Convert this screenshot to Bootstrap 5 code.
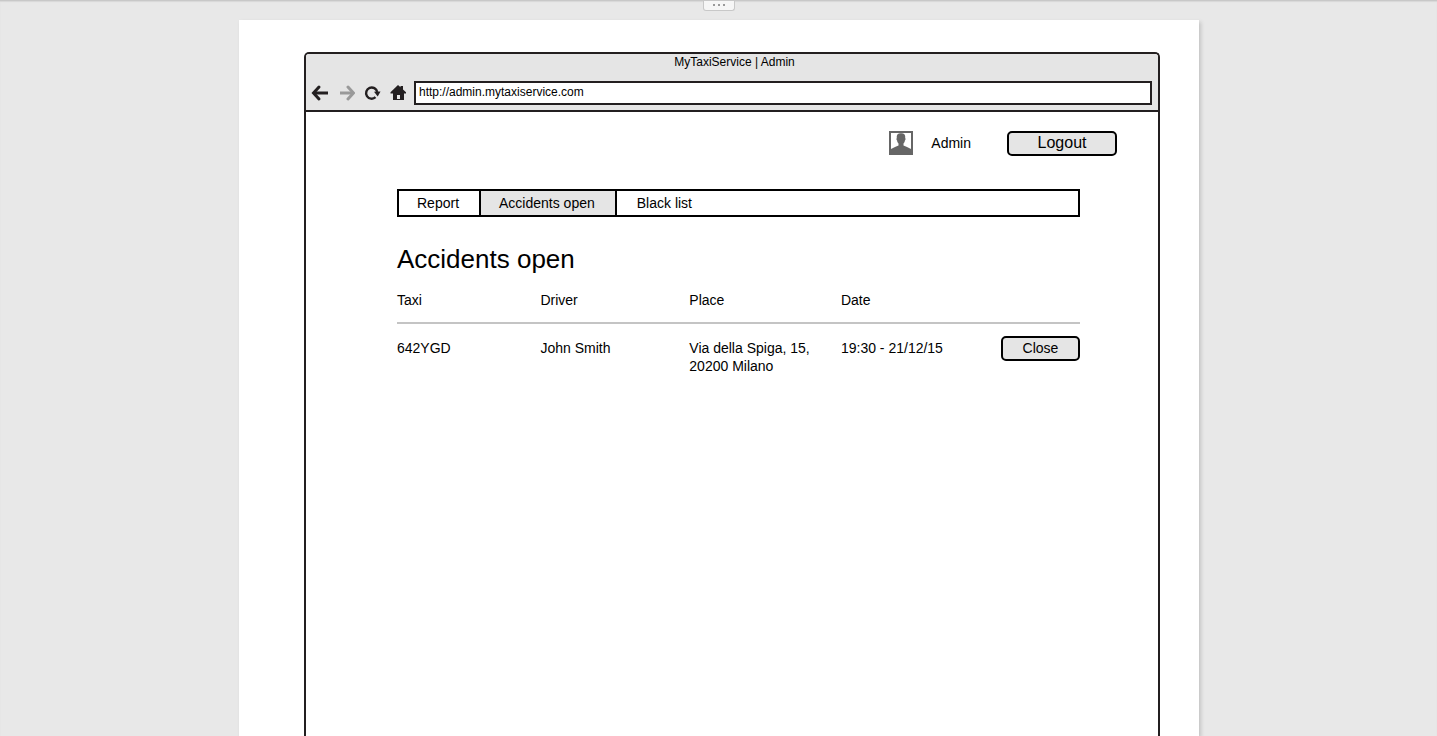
<!DOCTYPE html>
<html lang="en">
<head>
<meta charset="utf-8">
<meta name="viewport" content="width=device-width, initial-scale=1">
<title>MyTaxiService | Admin</title>
<link href="https://cdn.jsdelivr.net/npm/bootstrap@5.3.0/dist/css/bootstrap.min.css" rel="stylesheet">
<style>
  body { background: #e8e8e8; color: #000; font-family: "Liberation Sans", Arial, sans-serif; font-size: 14px; line-height: 18px; }
  .stage { border-top: 1px solid #c8c8c8; box-shadow: inset 0 1px 1px #d8d8d8; padding-left: 1px; }
  .drawer-handle { width: 32px; height: 10px; background: #f6f6f6; border: 1px solid #c8c8c8; border-top: 0; border-radius: 0 0 3px 3px; }
  .drawer-handle svg { display: block; }
  .sheet { max-width: 960px; margin-top: 19px; padding: 32px 39px 0 65px; background: #fff; box-shadow: 2px 2px 4px rgba(0,0,0,.16); }
  .browser { border: 2px solid #231f20; border-bottom: 0; border-radius: 5px 5px 0 0; }
  .chrome { background: #e5e5e5; border-bottom: 2px solid #231f20; border-radius: 3px 3px 0 0; padding: 0 6px 5px 5px; }
  .window-title { font-size: 12px; line-height: 16px; padding-left: 6px; margin-bottom: 11px; }
  .tool { color: #231f20; width: 18px; height: 18px; }
  .tool:disabled { color: #999; }
  .tool svg { display: block; }
  .address { height: 24px; margin-left: 7px; border: 2px solid #231f20; padding: 0 3px 2px; font-size: 12px; color: #000; background: #fff; min-width: 0; }
  .account { padding: 19px 41px 0 0; }
  .account svg { display: block; margin-bottom: 1px; }
  .account span { line-height: 24px; padding-bottom: 1px; margin-left: 18px; }
  .sketch-btn { height: 25px; padding: 0 0 1px; border: 2px solid #000; border-radius: 5px; background: #e5e5e5; color: #000; line-height: 20px; }
  .logout { width: 110px; font-size: 16px; margin-left: 36px; }
  .close-case { width: 79px; font-size: 14px; }
  .content { padding: 33px 78px 40px 91px; }
  .tabs { border: 2px solid #000; margin-bottom: 27px; }
  .tabs a { color: #000; text-decoration: none; line-height: 24px; padding: 0 20px 0 18px; border-right: 2px solid #000; }
  .tabs a.current { background: #e5e5e5; }
  .tabs a:last-child { border-right: 0; padding-left: 20px; }
  h1 { font-size: 26px; line-height: 30px; font-weight: 400; margin-bottom: 17px; }
  .cases { table-layout: fixed; width: 100%; }
  .cases th, .cases thead td { font-weight: 400; padding: 0 0 13px; border-bottom: 2px solid #c4c4c4; }
  .cases tbody td { padding: 15px 0 0; vertical-align: top; }
  .cases tbody td:last-child { padding-top: 12px; }
</style>
</head>
<body>
<div class="stage d-flex flex-column min-vh-100 position-relative">
  <button type="button" class="drawer-handle position-absolute top-0 start-50 translate-middle-x p-0" aria-label="Show panel">
    <svg width="30" height="7" viewBox="0 0 30 7" fill="#999"><path d="M9 2h2v2H9zM14 2h2v2h-2zM19 2h2v2h-2z"/></svg>
  </button>
  <div class="sheet w-100 mx-auto flex-grow-1 d-flex flex-column">
    <div class="browser flex-grow-1">
      <header class="chrome">
        <div class="window-title text-center">MyTaxiService | Admin</div>
        <div class="d-flex align-items-center">
          <button type="button" class="tool btn p-0 border-0" aria-label="Back">
            <svg width="18" height="18" viewBox="0 0 18 18" fill="none" stroke="currentColor" stroke-width="3"><path d="M17 9H4"/><path d="M8 3L2.500 9l5.500 6" stroke-linecap="round"/></svg>
          </button>
          <button type="button" class="tool btn p-0 border-0 opacity-100 ms-2 me-2" aria-label="Forward" disabled>
            <svg width="18" height="18" viewBox="0 0 18 18" fill="none" stroke="currentColor" stroke-width="3"><path d="M3 9h13"/><path d="M11 3l5.500 6-5.500 6" stroke-linecap="round"/></svg>
          </button>
          <button type="button" class="tool btn p-0 border-0" aria-label="Reload">
            <svg width="18" height="18" viewBox="0 0 18 18"><path d="M12.500 13.200A5.600 5.600 0 1 1 14.200 8" fill="none" stroke="currentColor" stroke-width="2.400"/><path d="M11 7.800l6.500-.3-2.800 5z" fill="currentColor"/></svg>
          </button>
          <button type="button" class="tool btn p-0 border-0 ms-2" aria-label="Home">
            <svg width="18" height="18" viewBox="0 0 18 18" fill="currentColor"><path d="M9 1L11.500 3.200V2h2.500v3.500L17 8.200V9.500h-2V16H4V9.500H1.500V8.200z"/><path d="M8 11h3v4H8z" fill="#e5e5e5"/></svg>
          </button>
          <input type="text" class="address flex-grow-1 rounded-0" value="http://admin.mytaxiservice.com" aria-label="Address">
        </div>
      </header>

      <div class="account d-flex justify-content-end align-items-center">
        <svg width="24" height="24" viewBox="0 0 24 24" aria-hidden="true"><path d="M0 0h24v24H0z" fill="#666"/><path d="M2 2h20v16l-4-2-3.500-1.500v-2c1-1 1.300-2 1.400-3 .8-.5.800-2 .3-2.500C16.500 3.500 15 2.200 12 2.200S7.500 3.500 7.800 7c-.5.500-.5 2 .3 2.500.1 1 .4 2 1.400 3v2L6 16l-4 2z" fill="#fff"/></svg>
        <span>Admin</span>
        <button type="button" class="sketch-btn logout">Logout</button>
      </div>

      <main class="content">
        <nav class="tabs d-flex" aria-label="Sections">
          <a href="#report">Report</a>
          <a href="#accidents" class="current" aria-current="page">Accidents open</a>
          <a href="#blacklist">Black list</a>
        </nav>
        <h1>Accidents open</h1>
        <table class="cases">
          <colgroup><col style="width:21%"><col style="width:21.8%"><col style="width:22.2%"><col style="width:23%"><col></colgroup>
          <thead>
            <tr><th scope="col">Taxi</th><th scope="col">Driver</th><th scope="col">Place</th><th scope="col">Date</th><td></td></tr>
          </thead>
          <tbody>
            <tr>
              <td>642YGD</td>
              <td>John Smith</td>
              <td>Via della Spiga, 15,<br>20200 Milano</td>
              <td>19:30 - 21/12/15</td>
              <td class="text-end"><button type="button" class="sketch-btn close-case">Close</button></td>
            </tr>
          </tbody>
        </table>
      </main>
    </div>
  </div>
</div>
<script src="https://cdn.jsdelivr.net/npm/bootstrap@5.3.0/dist/js/bootstrap.bundle.min.js"></script>
</body>
</html>
